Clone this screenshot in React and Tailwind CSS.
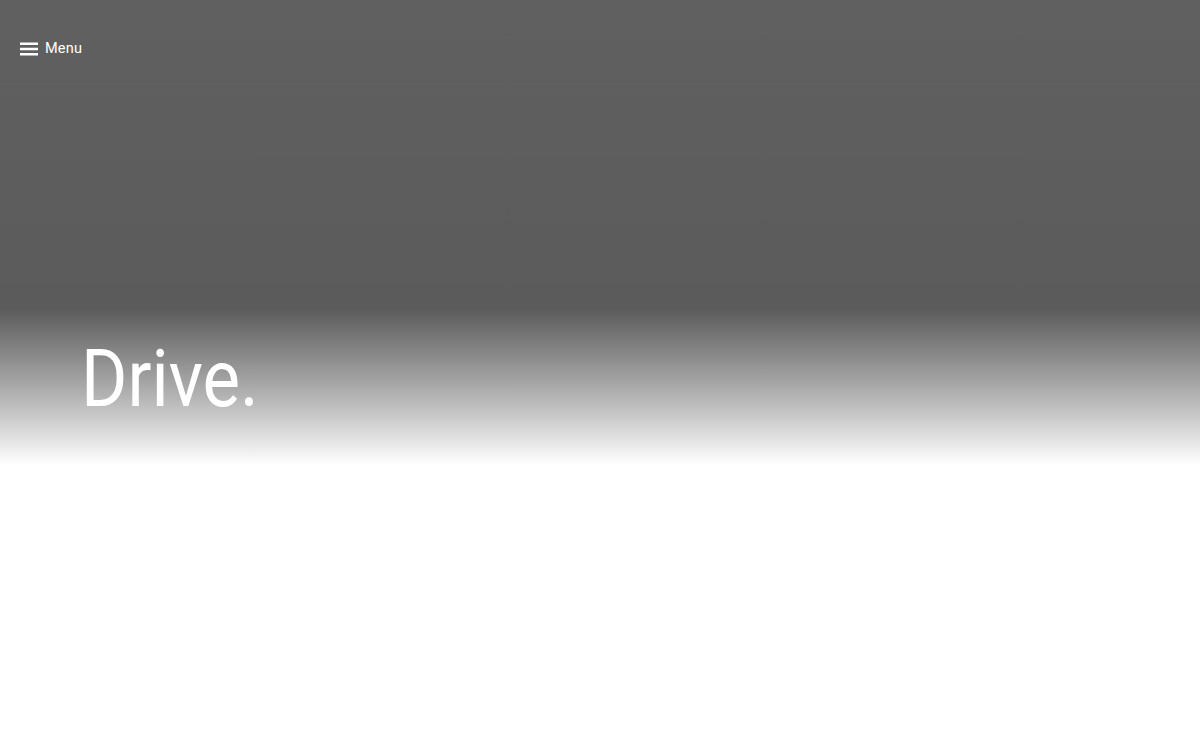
import React from "react";

export default function App() {
  return (
    <div className="w-full min-h-[750px] bg-white" style={{ fontFamily: "Roboto, 'Liberation Sans', sans-serif" }}>
      <div className="relative">
        <div className="h-[308px] bg-gradient-to-b from-[#606060] to-[#5b5b5b]" />
        <div className="h-[157px] bg-gradient-to-b from-[#5b5b5b] to-white" />
        <div className="absolute inset-0 flex flex-col">
          <div className="flex items-center gap-[7px] pl-5 pt-[41px] text-white">
            <svg width="18" height="14" viewBox="0 0 18 14" fill="none">
              <rect x="0" y="0.5" width="18" height="2.5" fill="white" />
              <rect x="0" y="5.75" width="18" height="2.5" fill="white" />
              <rect x="0" y="11" width="18" height="2.5" fill="white" />
            </svg>
            <span className="text-[14.5px] leading-[16px] tracking-[0.2px]">Menu</span>
          </div>
          <div className="pl-[81px] pt-[282px]">
            <h1 className="origin-left scale-x-[0.885] text-[80px] leading-[80px] font-normal text-white">Drive.</h1>
          </div>
        </div>
      </div>
    </div>
  );
}
